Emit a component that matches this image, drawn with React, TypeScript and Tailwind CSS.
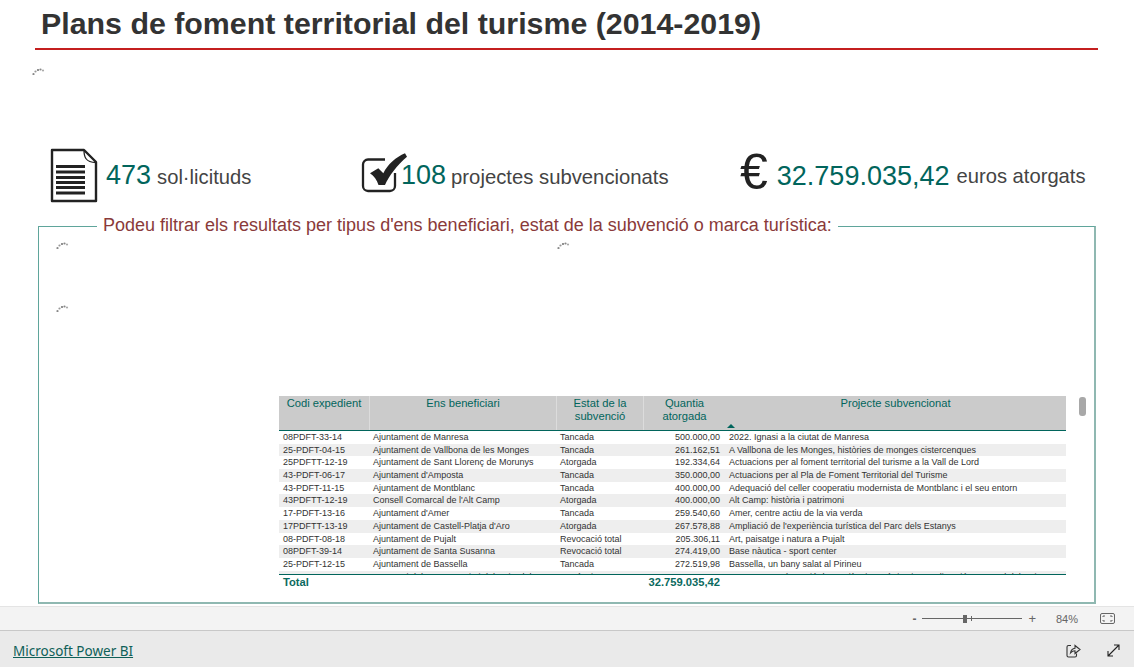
const rows = [
  ["08PDFT-33-14", "Ajuntament de Manresa", "Tancada", "500.000,00", "2022. Ignasi a la ciutat de Manresa"],
  ["25-PDFT-04-15", "Ajuntament de Vallbona de les Monges", "Tancada", "261.162,51", "A Vallbona de les Monges, històries de monges cistercenques"],
  ["25PDFTT-12-19", "Ajuntament de Sant Llorenç de Morunys", "Atorgada", "192.334,64", "Actuacions per al foment territorial del turisme a la Vall de Lord"],
  ["43-PDFT-06-17", "Ajuntament d'Amposta", "Tancada", "350.000,00", "Actuacions per al Pla de Foment Territorial del Turisme"],
  ["43-PDFT-11-15", "Ajuntament de Montblanc", "Tancada", "400.000,00", "Adequació del celler cooperatiu modernista de Montblanc i el seu entorn"],
  ["43PDFTT-12-19", "Consell Comarcal de l'Alt Camp", "Atorgada", "400.000,00", "Alt Camp: història i patrimoni"],
  ["17-PDFT-13-16", "Ajuntament d'Amer", "Tancada", "259.540,60", "Amer, centre actiu de la via verda"],
  ["17PDFTT-13-19", "Ajuntament de Castell-Platja d'Aro", "Atorgada", "267.578,88", "Ampliació de l'experiència turística del Parc dels Estanys"],
  ["08-PDFT-08-18", "Ajuntament de Pujalt", "Revocació total", "205.306,11", "Art, paisatge i natura a Pujalt"],
  ["08PDFT-39-14", "Ajuntament de Santa Susanna", "Revocació total", "274.419,00", "Base nàutica - sport center"],
  ["25-PDFT-12-15", "Ajuntament de Bassella", "Tancada", "272.519,98", "Bassella, un bany salat al Pirineu"],
  ["08-PDFT-18-18", "Consorci del Bages Anoia i del Baix Llobregat", "Renúncia", "99.900,07", "Can Garau: adaptació d'experiència Turística i senyalització comarcal del Baix"],
];

function Spinner() {
  return (
    <svg width="14" height="7" viewBox="0 0 14 7" className="block">
      <circle cx="1.500" cy="6" r="1.100" fill="#888" />
      <circle cx="3.500" cy="3.500" r="1.100" fill="#999" />
      <circle cx="6" cy="2" r="1.100" fill="#777" />
      <circle cx="8.500" cy="1.500" r="1.100" fill="#888" />
      <circle cx="11" cy="2.500" r="1.100" fill="#aaa" />
    </svg>
  );
}

function DocIcon() {
  return (
    <svg width="48" height="56" viewBox="0 0 48 56" className="block">
      <path d="M2 3H34L46 15V54H2Z" fill="#fff" stroke="#222" strokeWidth="2.400" strokeLinejoin="round" />
      <path d="M34 3C34 9 35 15.500 46 15.500" fill="none" stroke="#222" strokeWidth="1.300" />
      <path d="M6 19.500H35M6 25H35M6 30.500H35M6 35.500H35M6 40.500H35M6 46H35" stroke="#222" strokeWidth="3" />
    </svg>
  );
}

function CheckIcon() {
  return (
    <svg width="48" height="44" viewBox="0 0 48 44" className="block">
      <path d="M24 6.500H7A5 5 0 0 0 2 11.500V33A5 5 0 0 0 7 38H29A5 5 0 0 0 34 33V20" fill="none" stroke="#222" strokeWidth="2.300" />
      <path d="M9 20.300L17.300 15.300L22.300 20.300C27 11 35 4 44 0.300L46 3.700C36 12 28 23 24 32H17.500C16 27 13 23 9 20.300Z" fill="#222" />
    </svg>
  );
}

function FitIcon() {
  return (
    <svg width="15" height="11" viewBox="0 0 15 11" className="block" fill="none">
      <rect x="0.500" y="0.500" width="14" height="10" rx="1.500" stroke="#666" />
      <path d="M3 4V3H5M10 3H12V4M3 7V8H5M10 8H12V7" stroke="#666" />
    </svg>
  );
}

function ShareIcon() {
  return (
    <svg width="15" height="15" viewBox="0 0 15 15" className="block" fill="none" stroke="#333" strokeWidth="1.100">
      <path d="M5 2.500H2.500C1.500 2.500 1 3 1 4V12.500C1 13.500 1.500 14 2.500 14H9C10 14 10.500 13.500 10.500 12.500V10.500" />
      <path d="M4.500 10C5 7 7 5.500 9 5.300V2.500L14 6.500L9 10.500V7.800C7.300 7.800 5.800 8.500 4.500 10Z" />
    </svg>
  );
}

function ExpandIcon() {
  return (
    <svg width="13" height="13" viewBox="0 0 13 13" className="block" fill="none" stroke="#222" strokeWidth="1.100">
      <path d="M1 12L12 1M7 1H12V6M1 7V12H6" />
    </svg>
  );
}

const cols = "grid grid-cols-[90px_187px_87px_82px_341px]";

export default function App() {
  return (
    <div className="w-[1134px] h-[667px] overflow-hidden flex flex-col bg-white font-['Liberation_Sans',Arial,sans-serif]">
      <main className="h-[606px] shrink-0 flex flex-col">
        <header className="ml-[35px] mr-[36px] h-[50px] border-b-2 border-[#c41f1f] pl-[6px] pt-[7px]">
          <h1 className="text-[30.35px] leading-[34px] font-bold text-[#333333] whitespace-nowrap">
            Plans de foment territorial del turisme (2014-2019)
          </h1>
        </header>

        <div className="ml-[32px] mt-[18px]">
          <Spinner />
        </div>

        <section className="flex items-center h-[58px] mt-[71px]">
          <div className="flex items-center ml-[50px] w-[311px]">
            <DocIcon />
            <span className="ml-[8px] text-[27px] leading-[32px] text-[#01655c]">473</span>
            <span className="ml-[6px] text-[20.2px] leading-[32px] mt-[3px] text-[#444444]">sol·licituds</span>
          </div>
          <div className="flex items-center w-[379px]">
            <CheckIcon />
            <span className="-ml-[8px] text-[27px] leading-[32px] text-[#01655c]">108</span>
            <span className="ml-[5px] text-[20.3px] leading-[32px] mt-[3px] text-[#444444]">projectes subvencionats</span>
          </div>
          <div className="flex items-center mt-[1px]">
            <span className="text-[50px] leading-[50px] text-[#222222] -mt-[8px]">€</span>
            <span className="ml-[9px] text-[27px] leading-[32px] text-[#01655c]">32.759.035,42</span>
            <span className="ml-[7px] text-[20.2px] leading-[32px] text-[#444444]">euros atorgats</span>
          </div>
        </section>

        <fieldset className="ml-[38px] w-[1058px] h-[389px] mt-[11px] border border-[#5fa59b] border-r-2 border-b-2 border-r-[#8fb8b1] border-b-[#8fb8b1]">
          <legend className="ml-[58px] px-[6px] pb-[2px] text-[18px] leading-[21px] text-[#8a3a3a] whitespace-nowrap">
            Podeu filtrar els resultats per tipus d'ens beneficiari, estat de la subvenció o marca turística:
          </legend>
          <div className="flex pl-[17px] pt-[4px] h-[13px]">
            <div className="w-[501px]"><Spinner /></div>
            <Spinner />
          </div>
          <div className="pl-[17px] mt-[54px] h-[13px]">
            <Spinner />
          </div>
          <div className="flex ml-[240px] mt-[78px]">
            <div className="w-[787px]">
              <div className={`${cols} h-[35px] bg-[#cbcbcb] border-b border-[#01655c] text-[11.2px] leading-[13px] text-[#01655c]`}>
                <div className="text-center pt-[1px]">Codi expedient</div>
                <div className="border-l border-[#dcdcdc] text-center pt-[1px]">Ens beneficiari</div>
                <div className="border-l border-[#dcdcdc] text-center pt-[1px]">Estat de la<br />subvenció</div>
                <div className="border-l border-[#dcdcdc] text-center pt-[1px]">Quantia<br />atorgada</div>
                <div className="relative text-center pt-[1px]">
                  Projecte subvencionat
                  <svg width="8" height="4" viewBox="0 0 8 4" className="absolute left-[2px] bottom-[2px]">
                    <path d="M0 4L4 0L8 4Z" fill="#01655c" />
                  </svg>
                </div>
              </div>
              <div className="h-[143px] overflow-hidden">
                {rows.map((r, i) => (
                  <div key={r[0]} className={`${cols} h-[12.7px] text-[9px] leading-[12.7px] text-[#333333] whitespace-nowrap ${i % 2 === 1 ? "bg-[#eeeeee]" : ""}`}>
                    <div className="pl-[4px] overflow-hidden">{r[0]}</div>
                    <div className="pl-[4px] overflow-hidden">{r[1]}</div>
                    <div className="pl-[4px] overflow-hidden">{r[2]}</div>
                    <div className="pr-[5px] text-right overflow-hidden">{r[3]}</div>
                    <div className="pl-[4px] overflow-hidden">{r[4]}</div>
                  </div>
                ))}
              </div>
              <div className={`${cols} h-[15px] border-t border-[#01655c] text-[11.2px] leading-[14px] font-bold text-[#0b6a60]`}>
                <div className="pl-[4px]">Total</div>
                <div />
                <div />
                <div className="pr-[5px] text-right">32.759.035,42</div>
                <div />
              </div>
            </div>
            <div className="ml-[13px] w-[7px] h-[19px] mt-[1px] rounded-[3px] bg-[#a8a8a8]" />
          </div>
        </fieldset>
      </main>

      <div className="h-[25px] shrink-0 bg-[#f3f3f3] border-t border-[#e4e4e4] border-b border-b-[#c8c8c8] flex items-center justify-end text-[#666666]">
        <span className="text-[12px] leading-[12px] font-bold">-</span>
        <div className="relative w-[100px] h-[1px] bg-[#666666] ml-[6px]">
          <div className="absolute left-[41px] -top-[3px] w-[4px] h-[8px] bg-[#666666]" />
          <div className="absolute left-[49px] -top-[2px] w-[1px] h-[5px] bg-[#666666]" />
        </div>
        <span className="ml-[6px] text-[13px] leading-[13px]">+</span>
        <span className="ml-[20px] text-[11px] leading-[12px] w-[24px]">84%</span>
        <div className="ml-[20px] mr-[19px]"><FitIcon /></div>
      </div>

      <footer className="flex-1 bg-[#eaeaea] flex items-center pl-[13px] pr-[14px] pt-[3px]">
        <a href="#" className="font-['Noto_Sans',sans-serif] text-[13.5px] leading-[18px] text-[#0f5f58] underline">
          Microsoft Power BI
        </a>
        <div className="ml-auto flex items-center gap-[26px]">
          <ShareIcon />
          <ExpandIcon />
        </div>
      </footer>
    </div>
  );
}
